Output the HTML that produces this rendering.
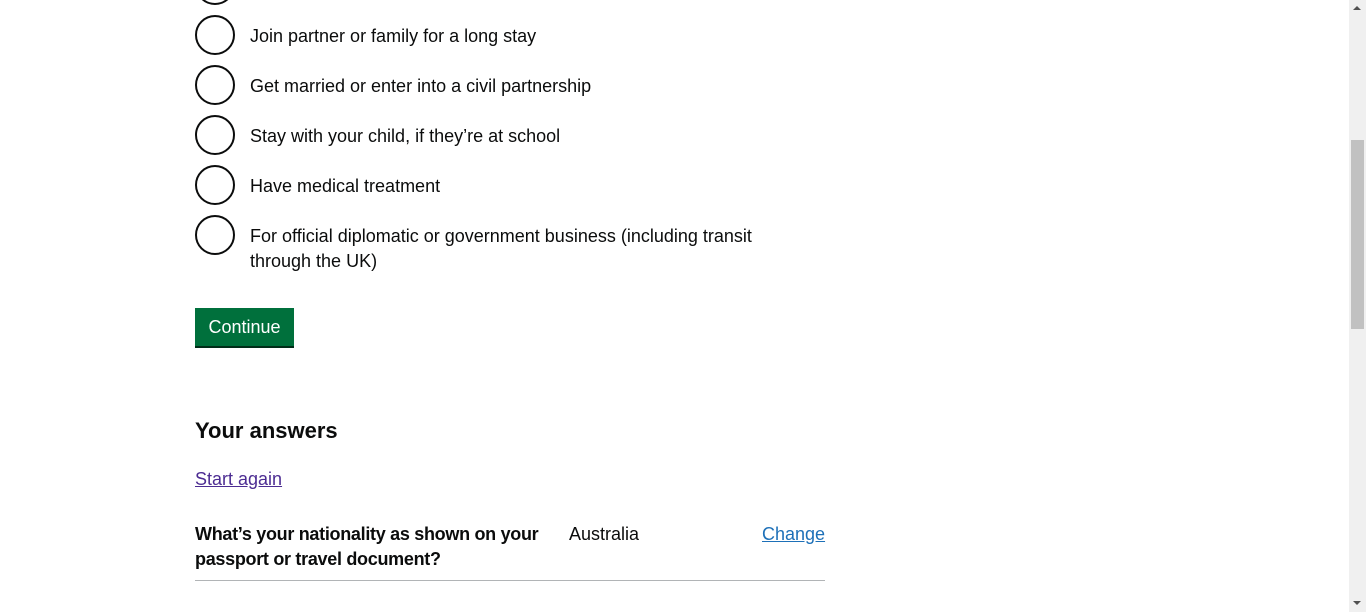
<!DOCTYPE html>
<html><head><meta charset="utf-8"><style>
html,body{margin:0;padding:0;background:#fff;width:1366px;height:612px;overflow:hidden;font-family:"Liberation Sans",sans-serif;color:#0b0c0c}
.r{position:absolute;left:195px;width:36px;height:36px;border:2px solid #0b0c0c;border-radius:50%}
.t{position:absolute;left:250px;font-size:18px;line-height:25px;white-space:nowrap}
.btn{position:absolute;left:195px;top:308px;width:99px;height:38px;background:#00703c;box-shadow:0 2px 0 #002d18;color:#fff;font-size:18px;line-height:39px;text-align:center}
.sb{position:absolute;left:1349px;top:0;width:17px;height:612px;background:#f0f0f0}
.th{position:absolute;left:1351px;top:140px;width:13px;height:189px;background:#c1c1c1}
</style></head><body>
<div class="r" style="top:-35px"></div>
<div class="r" style="top:15px"></div><div class="t" style="top:24px">Join partner or family for a long stay</div>
<div class="r" style="top:65px"></div><div class="t" style="top:74px">Get married or enter into a civil partnership</div>
<div class="r" style="top:115px"></div><div class="t" style="top:124px">Stay with your child, if they’re at school</div>
<div class="r" style="top:165px"></div><div class="t" style="top:174px">Have medical treatment</div>
<div class="r" style="top:215px"></div><div class="t" style="top:224px">For official diplomatic or government business (including transit<br>through the UK)</div>
<div class="btn">Continue</div>
<div style="position:absolute;left:195px;top:416px;font-size:22px;font-weight:bold;line-height:30px">Your answers</div>
<div style="position:absolute;left:195px;top:467px;font-size:18px;line-height:25px;color:#4c2c92;text-decoration:underline">Start again</div>
<div style="position:absolute;left:195px;top:522px;font-size:18px;line-height:25px;font-weight:bold;letter-spacing:-0.3px">What’s your nationality as shown on your<br>passport or travel document?</div>
<div style="position:absolute;left:569px;top:522px;font-size:18px;line-height:25px">Australia</div>
<div style="position:absolute;left:762px;top:522px;font-size:18px;line-height:25px;color:#1d70b8;text-decoration:underline">Change</div>
<div style="position:absolute;left:195px;top:580px;width:630px;height:1px;background:#b1b4b6"></div>
<div class="sb"></div><div class="th"></div>
<div style="position:absolute;left:1353px;top:6px;width:0;height:0;border-left:4px solid transparent;border-right:4px solid transparent;border-bottom:4px solid #505050"></div>
<div style="position:absolute;left:1353px;top:601px;width:0;height:0;border-left:4px solid transparent;border-right:4px solid transparent;border-top:4px solid #505050"></div>
</body></html>
